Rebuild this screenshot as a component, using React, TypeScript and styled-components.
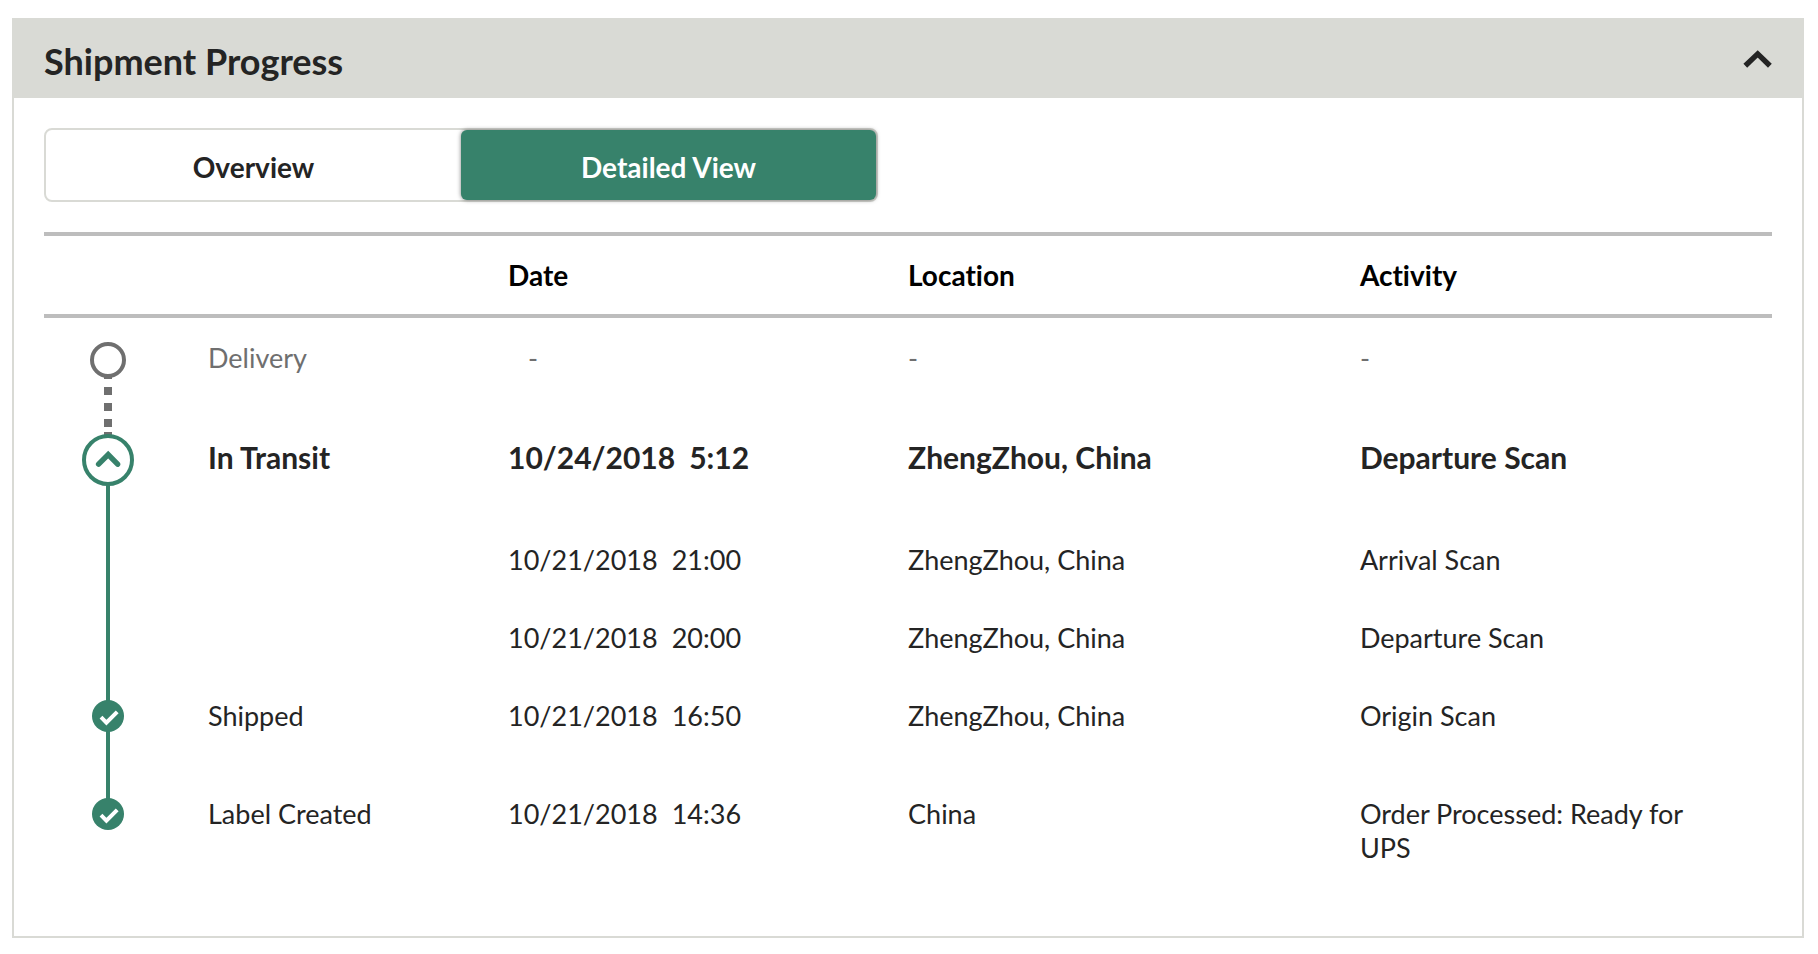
import React, { useState } from "react";
import styled, { createGlobalStyle, css } from "styled-components";

const GREEN = "#37826b";
const GRAY = "#6f6f6f";
const BORDER = "#d9dad5";
const INK = "#242424";

const GlobalStyle = createGlobalStyle`
  *, *::before, *::after { box-sizing: border-box; }
  body {
    margin: 0;
    background: #fff;
    color: ${INK};
    font-family: Lato, "Noto Sans", sans-serif;
    font-size: 27px;
    line-height: 34px;
    font-variant-ligatures: none;
  }
  button { font: inherit; color: inherit; cursor: pointer; }
`;

const Card = styled.section`
  margin: 18px 14px 16px 12px;
  border: 2px solid ${BORDER};
`;

const CardHeader = styled.header`
  display: flex;
  align-items: center;
  justify-content: space-between;
  height: 78px;
  padding: 0 30px;
  background: ${BORDER};
`;

const Title = styled.h2`
  margin: 0;
  padding-top: 3px;
  font-size: 36px;
  line-height: 44px;
  font-weight: 700;
`;

const IconButton = styled.button`
  display: flex;
  padding: 0;
  border: 0;
  background: none;
`;

const CardBody = styled.div`
  padding: 30px 30px 64px;
`;

const Tabs = styled.div`
  display: flex;
  width: 100%;
  max-width: 834px;
  height: 74px;
  margin-bottom: 30px;
  border: 2px solid ${BORDER};
  border-radius: 8px;
`;

const Tab = styled.button<{ $active: boolean }>`
  flex: 1;
  padding: 4px 0 0;
  border: 0;
  border-radius: 6px;
  background: none;
  font-size: 28px;
  font-weight: 700;
  ${({ $active }) =>
    $active &&
    css`
      background: ${GREEN};
      color: #fff;
      box-shadow: 0 0 4px rgba(0, 0, 0, 0.5);
    `}
`;

const Table = styled.table`
  width: 100%;
  table-layout: fixed;
  border-collapse: separate;
  border-spacing: 0;
  text-align: left;
`;

const Col = styled.col<{ $width?: string }>`
  width: ${({ $width }) => $width ?? "auto"};
`;

const HeadCell = styled.th`
  height: 86px;
  padding: 0;
  border-top: 4px solid #bdbdbd;
  border-bottom: 4px solid #bdbdbd;
  color: #000;
  font-size: 28px;
  font-weight: 700;
`;

type Tone = "pending" | "current" | "normal";

const Row = styled.tr<{ $height: number; $tone: Tone }>`
  height: ${({ $height }) => $height}px;
  ${({ $tone }) => $tone === "pending" && `color: ${GRAY};`}
  ${({ $tone }) => $tone === "current" && "font-size: 30px; font-weight: 700;"}
`;

const Cell = styled.td`
  padding: 23px 48px 0 0;
  vertical-align: top;
`;

const StageCell = styled.th`
  padding: 23px 0 0 36px;
  vertical-align: top;
  font-weight: inherit;
`;

const DateTime = styled.div<{ $indent: boolean }>`
  display: flex;
  gap: 14px;
  padding-left: ${({ $indent }) => ($indent ? 20 : 0)}px;
`;

type Track = "open" | "expanded" | "through" | "start" | "end";

const solid = (color: string) => `linear-gradient(${color}, ${color})`;
const dashes = `repeating-linear-gradient(${GRAY} 0 8px, transparent 8px 16px)`;

const tracks: Record<Track, string> = {
  open: `${dashes} 50% 53px / 8px 46px no-repeat`,
  expanded: `${solid(GRAY)} 50% 2px / 8px 8px no-repeat, ${solid(GRAY)} 50% 15px / 8px 4px no-repeat, ${solid(GREEN)} 50% 68px / 4px 100% no-repeat`,
  through: `${solid(GREEN)} 50% 0 / 4px 100% no-repeat`,
  start: `${solid(GREEN)} 50% 0 / 4px 100% no-repeat`,
  end: `${solid(GREEN)} 50% 0 / 4px 40px no-repeat`,
};

const TrackCell = styled.td<{ $track: Track }>`
  padding: ${({ $track }) => ($track === "expanded" ? 17 : 24)}px 0 0;
  vertical-align: top;
  background: ${({ $track }) => tracks[$track]};
`;

const Marker = styled.div`
  display: flex;
  justify-content: center;
`;

const RingButton = styled.button`
  display: flex;
  align-items: center;
  justify-content: center;
  width: 52px;
  height: 52px;
  padding: 0 0 2px;
  border: 4px solid ${GREEN};
  border-radius: 50%;
  background: #fff;
  color: ${GREEN};
`;

const EmptyRing = styled.span`
  width: 36px;
  height: 36px;
  border: 4px solid ${GRAY};
  border-radius: 50%;
  background: #fff;
`;

const HeaderChevron = () => (
  <svg width="29" height="18" viewBox="0 0 29 18" fill="none" aria-hidden="true">
    <path d="M2.3 15.8 14.7 3.9l12.2 11.9" stroke={INK} strokeWidth="5.4" />
  </svg>
);

const RingChevron = () => (
  <svg width="26" height="18" viewBox="0 0 26 18" fill="none" aria-hidden="true">
    <path
      d="M3.6 14.2 13.2 4.6l9.4 9.6"
      stroke="currentColor"
      strokeWidth="5.4"
      strokeLinecap="round"
    />
  </svg>
);

const CheckMark = () => (
  <svg width="32" height="32" viewBox="0 0 32 32" fill="none" role="img" aria-label="Completed">
    <circle cx="16" cy="16" r="16" fill={GREEN} />
    <path d="M9 17.2l5.4 5.4L25.2 11.8" stroke="#fff" strokeWidth="4" />
  </svg>
);

interface ScanEvent {
  stage?: string;
  date?: string;
  time?: string;
  location: string;
  activity: string;
  height: number;
  tone: Tone;
  track: Track;
  detail?: boolean;
}

const events: ScanEvent[] = [
  { stage: "Delivery", location: "-", activity: "-", height: 99, tone: "pending", track: "open" },
  { stage: "In Transit", date: "10/24/2018", time: "5:12", location: "ZhengZhou, China", activity: "Departure Scan", height: 103, tone: "current", track: "expanded" },
  { date: "10/21/2018", time: "21:00", location: "ZhengZhou, China", activity: "Arrival Scan", height: 78, tone: "normal", track: "through", detail: true },
  { date: "10/21/2018", time: "20:00", location: "ZhengZhou, China", activity: "Departure Scan", height: 78, tone: "normal", track: "through", detail: true },
  { stage: "Shipped", date: "10/21/2018", time: "16:50", location: "ZhengZhou, China", activity: "Origin Scan", height: 98, tone: "normal", track: "start" },
  { stage: "Label Created", date: "10/21/2018", time: "14:36", location: "China", activity: "Order Processed: Ready for UPS", height: 98, tone: "normal", track: "end" },
];

export default function App() {
  const [open, setOpen] = useState(true);
  const [view, setView] = useState("Detailed View");
  const [expanded, setExpanded] = useState(true);

  return (
    <>
      <GlobalStyle />
      <Card>
        <CardHeader>
          <Title>Shipment Progress</Title>
          <IconButton
            type="button"
            aria-label="Toggle shipment progress"
            aria-expanded={open}
            onClick={() => setOpen(!open)}
          >
            <HeaderChevron />
          </IconButton>
        </CardHeader>
        {open && (
          <CardBody>
            <Tabs role="group" aria-label="View">
              {["Overview", "Detailed View"].map((name) => (
                <Tab
                  key={name}
                  type="button"
                  aria-pressed={view === name}
                  $active={view === name}
                  onClick={() => setView(name)}
                >
                  {name}
                </Tab>
              ))}
            </Tabs>
            <Table>
              <colgroup>
                <Col $width="128px" />
                <Col $width="336px" />
                <Col $width="23.15%" />
                <Col $width="26.15%" />
                <Col />
              </colgroup>
              <thead>
                <tr>
                  <HeadCell as="td" />
                  <HeadCell as="td" />
                  <HeadCell scope="col">Date</HeadCell>
                  <HeadCell scope="col">Location</HeadCell>
                  <HeadCell scope="col">Activity</HeadCell>
                </tr>
              </thead>
              <tbody>
                {events
                  .filter((event) => expanded || !event.detail)
                  .map((event, index) => (
                    <Row key={index} $height={event.height} $tone={event.tone}>
                      <TrackCell $track={event.track}>
                        <Marker>
                          {event.track === "open" && <EmptyRing />}
                          {event.track === "expanded" && (
                            <RingButton
                              type="button"
                              aria-label="Toggle transit details"
                              aria-expanded={expanded}
                              onClick={() => setExpanded(!expanded)}
                            >
                              <RingChevron />
                            </RingButton>
                          )}
                          {(event.track === "start" || event.track === "end") && <CheckMark />}
                        </Marker>
                      </TrackCell>
                      {event.stage ? (
                        <StageCell scope="row">{event.stage}</StageCell>
                      ) : (
                        <StageCell as="td" />
                      )}
                      <Cell>
                        <DateTime $indent={!event.date}>
                          <span>{event.date ?? "-"}</span>
                          {event.time && <span>{event.time}</span>}
                        </DateTime>
                      </Cell>
                      <Cell>{event.location}</Cell>
                      <Cell>{event.activity}</Cell>
                    </Row>
                  ))}
              </tbody>
            </Table>
          </CardBody>
        )}
      </Card>
    </>
  );
}
